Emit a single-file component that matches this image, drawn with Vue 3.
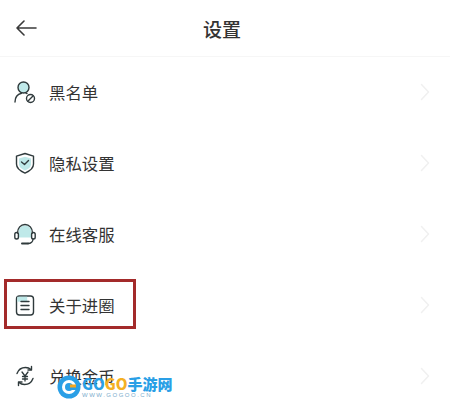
<script setup>
const rows = [
  { key: 'block', label: '黑名单' },
  { key: 'shield', label: '隐私设置' },
  { key: 'service', label: '在线客服' },
  { key: 'about', label: '关于进圈' },
  { key: 'coin', label: '兑换金币' },
]
</script>

<template>
  <div class="page">
    <header class="bar">
      <svg class="back" width="22" height="16" viewBox="0 0 22 16" fill="none" stroke="#3a3a3a" stroke-width="1.6" stroke-linecap="round" stroke-linejoin="round">
        <path d="M21 8H2M9 1L2 8l7 7" />
      </svg>
      <h1 class="title">设置</h1>
    </header>

    <ul class="list">
      <li v-for="r in rows" :key="r.key" class="row" :class="{ marked: r.key === 'about' }">
        <svg class="icon" width="24" height="24" viewBox="0 0 24 24" fill="none" stroke="#2f3a3c" stroke-width="1.4" stroke-linecap="round" stroke-linejoin="round">
          <template v-if="r.key === 'block'">
            <circle cx="10.5" cy="7.5" r="5.5" fill="#bfe9e9" />
            <path d="M2 22c0-5 3-8 6.5-8.8M13 13.2l1 .4" />
            <circle cx="17.5" cy="18.5" r="4" />
            <path d="M15 21l5-5" />
          </template>
          <template v-else-if="r.key === 'shield'">
            <path d="M12 2.5l8.5 2.6v8c0 4-3.5 7-8.5 9-5-2-8.5-5-8.5-9v-8z" />
            <path d="M6 7.5l6-1.8 6 1.8v6c0 2.5-2.500 4.500-6 6-3.500-1.500-6-3.500-6-6z" fill="#bfe9e9" stroke="none" />
            <path d="M8.500 11l3 2.500 4-4" />
          </template>
          <template v-else-if="r.key === 'service'">
            <path d="M12 3.500c4 0 6.500 3 6.500 7v5H5.500v-5c0-4 2.500-7 6.500-7z" fill="#bfe9e9" stroke="none" />
            <path d="M4.500 11c0-5 3.200-8.500 7.500-8.500S19.500 6 19.500 11" />
            <rect x="1.800" y="10.500" width="3.600" height="6.500" rx="1.800" />
            <rect x="18.600" y="10.500" width="3.600" height="6.500" rx="1.800" />
            <path d="M20 17c0 2.500-2 4.500-5 4.500" />
            <path d="M9 21.500h6" stroke-width="2" />
          </template>
          <template v-else-if="r.key === 'about'">
            <rect x="3.500" y="3" width="17" height="19" rx="3" />
            <path d="M4.200 3.700h10v5h-10z" fill="#bfe9e9" stroke="none" />
            <path d="M8 8.500h8M8 12.500h8M8 16.500h8" />
          </template>
          <template v-else>
            <path d="M4 9.500C5.500 5.500 9 3.500 12.500 3.500c2 0 4 .7 5.500 2M20 14.500c-1.500 4-5 6-8.500 6-2 0-4-.7-5.500-2" />
            <path d="M18.500 2.500v3.500H15M5.500 21.500V18H9" />
            <path d="M9 8l3 4 3-4M12 12v5M9.500 12.500h5M9.500 15h5" stroke-width="1.300" />
          </template>
        </svg>
        <span class="label">{{ r.label }}</span>
        <svg class="chev" width="10" height="18" viewBox="0 0 10 18" fill="none" stroke="#f0f0f0" stroke-width="1.5" stroke-linecap="round" stroke-linejoin="round">
          <path d="M1.500 1.500L8.500 9l-7 7.500" />
        </svg>
      </li>
    </ul>

    <div class="mark">
      <svg class="mark-logo" width="24" height="24" viewBox="0 0 24 24">
        <circle cx="12" cy="12" r="11.500" fill="#2a9fe6" />
        <circle cx="12" cy="12" r="7" fill="#fff" />
        <circle cx="12" cy="12" r="4" fill="#2a9fe6" />
        <path d="M12 11h11v4H12z" fill="#2a9fe6" />
        <path d="M13 9.500h6v3h-6z" fill="#f4a623" />
      </svg>
      <div class="mark-text">
        <div class="mark-name"><span class="go1">GO</span><span class="go2">GO</span><span class="go1">手游网</span></div>
        <div class="mark-url">WWW.GOGOO.CN</div>
      </div>
    </div>
  </div>
</template>

<style>
html, body { margin: 0; background: #fff; }
</style>

<style scoped>
.page {
  position: relative;
  width: 450px;
  height: 407px;
  overflow: hidden;
  background: #fff;
  font-family: "Noto Sans CJK SC", "Liberation Sans", sans-serif;
}
.bar {
  position: relative;
  height: 56px;
  display: flex;
  align-items: center;
  justify-content: center;
  border-bottom: 1px solid #f6f6f6;
}
.back {
  position: absolute;
  left: 15px;
  top: 20px;
}
.title {
  margin: 0;
  font-size: 19px;
  font-weight: 500;
  color: #333;
  line-height: 1;
  transform: translateX(-3px);
}
.list {
  list-style: none;
  margin: 0;
  padding: 0;
}
.row {
  height: 70.800px;
  display: flex;
  align-items: center;
  padding: 0 20px 0 13px;
  box-sizing: border-box;
}
.icon { flex: none; }
.label {
  margin-left: 12px;
  font-size: 16.400px;
  color: #333;
  flex: 1;
}
.chev { flex: none; }
.marked { position: relative; }
.marked::after {
  content: "";
  position: absolute;
  left: 4px;
  top: 10px;
  width: 132px;
  height: 50px;
  box-sizing: border-box;
  border: 3px solid #a32a2a;
}
.mark {
  position: absolute;
  left: 57px;
  top: 375px;
  display: flex;
  align-items: center;
  gap: 1px;
}
.mark-text { display: flex; flex-direction: column; }
.mark-name {
  font-family: "Noto Sans CJK SC", sans-serif;
  font-size: 15px;
  font-weight: 900;
  line-height: 17px;
  white-space: nowrap;
}
.go1 { color: #2a9fe6; }
.go2 { color: #f4b023; }
.mark-url {
  font-family: "Liberation Sans", sans-serif;
  font-size: 6px;
  line-height: 7px;
  letter-spacing: 1.500px;
  color: #7aaccc;
  white-space: nowrap;
}
</style>
